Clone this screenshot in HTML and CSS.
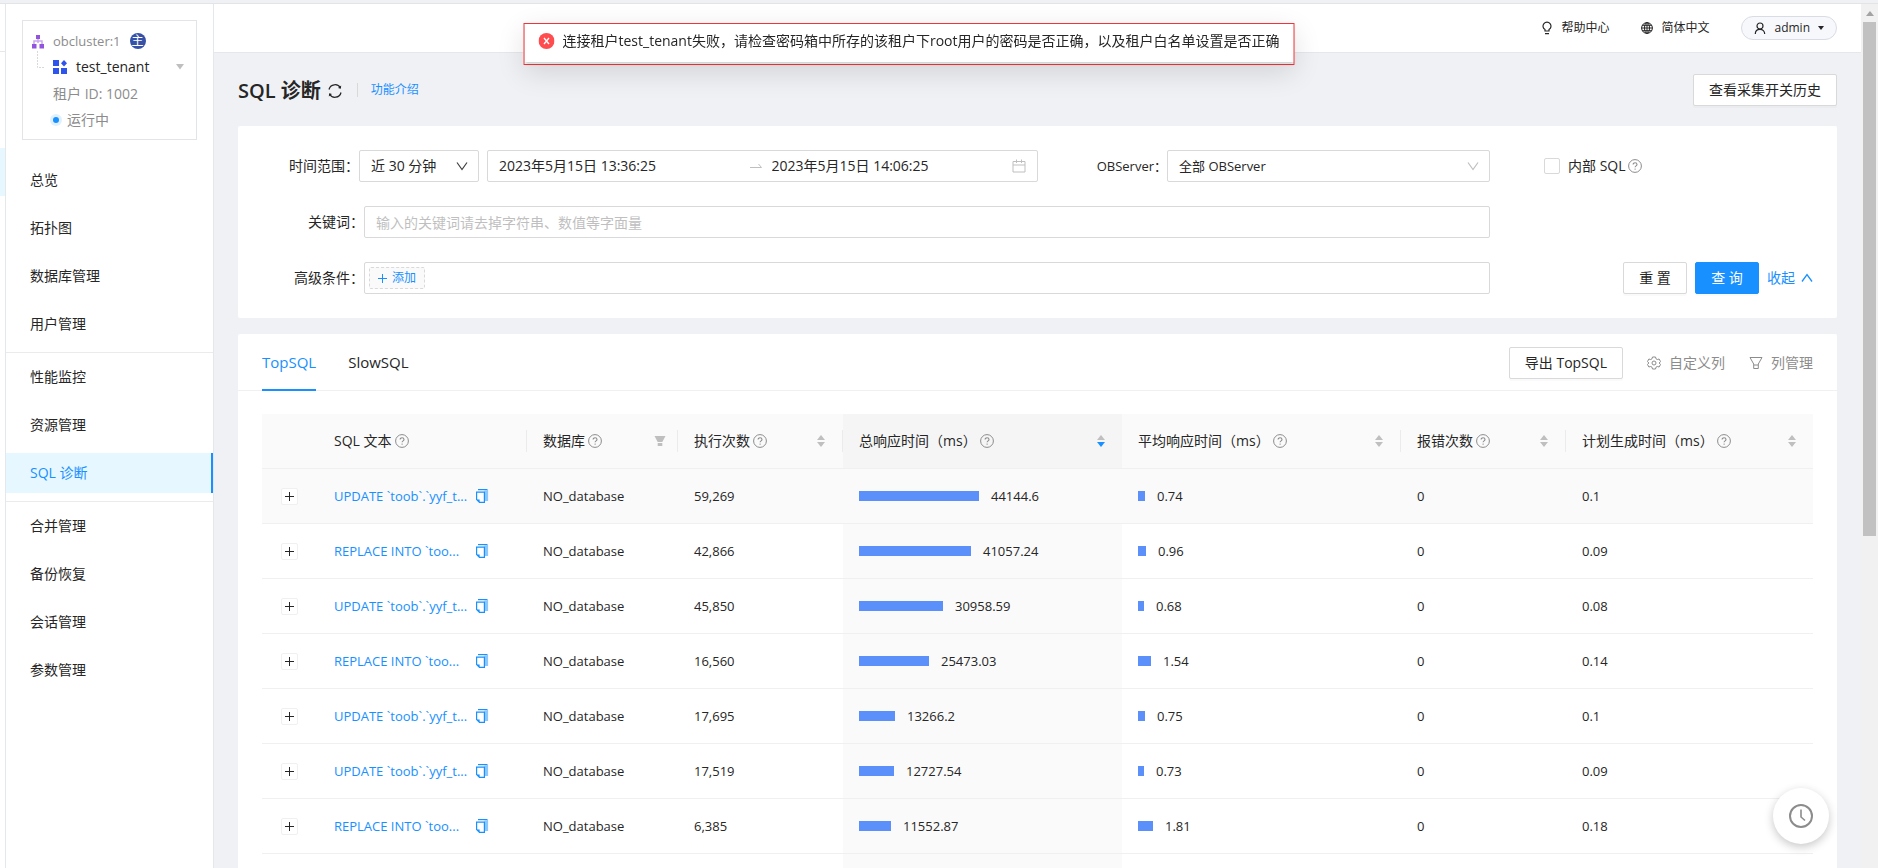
FILE: index.html
```html
<!DOCTYPE html>
<html lang="zh-CN">
<head>
<meta charset="utf-8">
<title>SQL 诊断</title>
<link rel="stylesheet" href="styles.css">
</head>
<body>
<svg class="sprite" aria-hidden="true">
  <symbol id="help" viewBox="0 0 14 14"><circle cx="7" cy="7" r="6.4" fill="none" stroke="currentColor"/><path d="M5.1 5.6c0-2.5 3.9-2.4 3.9 0 0 1.300-1.900 1.300-1.900 2.700" fill="none" stroke="currentColor" stroke-width="1.100"/><circle cx="7.100" cy="10.100" r=".7" fill="currentColor"/></symbol>
  <symbol id="copy" viewBox="0 0 14 14"><path d="M9.500 1.500h3v10.500h-3z" fill="#8cc8ff"/><path d="M3 .6h9.500" fill="none" stroke="#1890ff" stroke-width="1.200"/><path d="M12.500 .6v11.400" fill="none" stroke="#8cc8ff" stroke-width="1.200"/><path d="M1.600 3.200h7.800v10.200H4.500L1.600 10.600z" fill="#fff" stroke="#1890ff" stroke-width="1.200"/><path d="M1.600 10.400h3v3z" fill="#1890ff"/></symbol>
  <symbol id="sort" viewBox="0 0 10 14"><path d="M5 1l4 5H1z" class="sort-up"/><path d="M5 13l4-5H1z" class="sort-down"/></symbol>
  <symbol id="chevron" viewBox="0 0 12 12"><path d="M1 2.500l5 7 5-7" fill="none" stroke="currentColor" stroke-width="1.200"/></symbol>
  <symbol id="plus" viewBox="0 0 9 9"><path d="M4.500 0v9M0 4.500h9" fill="none" stroke="currentColor"/></symbol>
</svg>

<div class="topstrip"></div>
<div class="app">
  <div class="rail"><div class="rail-head"></div><div class="rail-active"></div></div>

  <aside class="sidebar">
    <section class="tenant">
      <div class="tenant-tree">
        <svg width="14" height="42" viewBox="0 0 14 42"><path d="M7 3v6M3 12V7h8v5" fill="none" stroke="#c9a7ef" stroke-width="1.500"/><path d="M5 1h4v4H5zM1 10h4.500v4.500H1zM8.500 10H13v4.500H8.500z" fill="#9254de"/><path d="M6.500 17v16.500H14" fill="none" stroke="#d9d9d9" stroke-dasharray="2 1"/></svg>
      </div>
      <div class="tenant-info">
        <div class="cluster"><span>obcluster:1</span><span class="badge">主</span></div>
        <button class="tenant-name" type="button">
          <svg width="14" height="14" viewBox="0 0 14 14" fill="#2f54eb"><path d="M0 0h6v6H0zM0 8h6v6H0zM8 8h6v6H8zM11 0l3 3.200-3 3.200-3-3.200z"/></svg>
          <span>test_tenant</span>
          <svg class="caret" width="8" height="6" viewBox="0 0 8 6"><path d="M0 0h8L4 5.500z" fill="#bfbfbf"/></svg>
        </button>
        <div class="tenant-line">租户 ID: 1002</div>
        <div class="tenant-line state"><i class="dot"></i>运行中</div>
      </div>
    </section>
    <nav class="menu">
      <a href="#">总览</a>
      <a href="#">拓扑图</a>
      <a href="#">数据库管理</a>
      <a href="#">用户管理</a>
      <hr>
      <a href="#">性能监控</a>
      <a href="#">资源管理</a>
      <a href="#" class="active">SQL 诊断</a>
      <hr>
      <a href="#">合并管理</a>
      <a href="#">备份恢复</a>
      <a href="#">会话管理</a>
      <a href="#">参数管理</a>
    </nav>
  </aside>

  <main class="main">
    <header class="header">
      <a href="#" class="header-link"><svg width="12" height="14" viewBox="0 0 12 14" fill="none" stroke="currentColor" stroke-width="1.200"><path d="M4 10V8.600a4 4 0 1 1 4 0V10zM4 12.600h4"/></svg>帮助中心</a>
      <a href="#" class="header-link"><svg width="12" height="12" viewBox="0 0 12 12" fill="none" stroke="currentColor"><circle cx="6" cy="6" r="5.400"/><ellipse cx="6" cy="6" rx="2.500" ry="5.400"/><path d="M6 .5v11M.5 6h11M1.200 3.300h9.600M1.200 8.700h9.600"/></svg>简体中文</a>
      <button class="user" type="button"><svg width="12" height="12" viewBox="0 0 12 12" fill="none" stroke="currentColor" stroke-width="1.200"><circle cx="6" cy="4" r="3"/><path d="M1.300 12c0-3 2-4.600 4.700-4.600S10.700 9 10.700 12"/></svg><span>admin</span><svg class="user-caret" width="6" height="4" viewBox="0 0 6 4"><path d="M0 0h6L3 4z" fill="currentColor"/></svg></button>
    </header>

    <div class="content">
      <div class="page-head">
        <h1>SQL 诊断</h1>
        <button class="icon-btn" type="button" aria-label="刷新"><svg width="16" height="16" viewBox="0 0 16 16" fill="none" stroke="currentColor" stroke-width="1.300"><path d="M2 6.500A6.200 6.200 0 0 1 13.500 5M14 9.500A6.200 6.200 0 0 1 2.500 11"/><path d="M14.200 2.500l-.4 3.200-2.800-.6zM1.800 13.500l.4-3.200 2.800.6z" fill="currentColor" stroke="none"/></svg></button>
        <a href="#" class="intro">功能介绍</a>
        <button class="btn history" type="button">查看采集开关历史</button>
      </div>

      <form class="panel filters">
        <div class="row">
          <div class="fields">
            <label class="label" for="span">时间范围：</label>
            <div class="select-wrap span"><select id="span"><option>近 30 分钟</option></select><svg class="arrow dark" width="12" height="12"><use href="#chevron"/></svg></div>
            <div class="range">
              <input type="text" aria-label="开始时间" value="2023年5月15日 13:36:25">
              <svg class="to" width="12" height="12" viewBox="0 0 12 12" fill="none" stroke="#bfbfbf"><path d="M0 7.500h11.500L8.500 4"/></svg>
              <input type="text" aria-label="结束时间" value="2023年5月15日 14:06:25">
              <svg width="14" height="14" viewBox="0 0 14 14" fill="none" stroke="#bfbfbf"><path d="M1 2.500h12v10.500H1zM1 6h12M4.500.5v3.500M9.500.5v3.500"/></svg>
            </div>
            <label class="label server-label" for="server">OBServer：</label>
            <div class="select-wrap server"><select id="server"><option>全部 OBServer</option></select><svg class="arrow" width="12" height="12"><use href="#chevron"/></svg></div>
          </div>
          <div class="side"><label class="check"><input type="checkbox"><span>内部 SQL</span></label><svg class="help" width="14" height="14"><use href="#help"/></svg></div>
        </div>
        <div class="row">
          <div class="fields">
            <label class="label wide" for="keyword">关键词：</label>
            <input class="text" id="keyword" type="text" placeholder="输入的关键词请去掉字符串、数值等字面量">
          </div>
        </div>
        <div class="row">
          <div class="fields">
            <span class="label wide">高级条件：</span>
            <div class="text conditions"><button class="add" type="button"><svg width="9" height="9"><use href="#plus"/></svg>添加</button></div>
          </div>
          <div class="actions">
            <button class="btn" type="reset">重 置</button>
            <button class="btn primary" type="button">查 询</button>
            <a href="#" class="fold">收起<svg width="12" height="12" viewBox="0 0 12 12"><path d="M1 9.500l5-7 5 7" fill="none" stroke="currentColor" stroke-width="1.300"/></svg></a>
          </div>
        </div>
      </form>

      <section class="panel results">
        <div class="tabs">
          <a href="#" class="tab active">TopSQL</a>
          <a href="#" class="tab">SlowSQL</a>
          <div class="tools">
            <button class="btn" type="button">导出 TopSQL</button>
            <a href="#" class="tool"><svg width="14" height="14" viewBox="0 0 14 14" fill="none" stroke="currentColor"><path d="M5.500 1h3l.5 1.800 1.300.7 1.800-.5 1.400 2.500L12.200 7l1.300 1.500-1.400 2.500-1.800-.5-1.300.7-.5 1.800h-3L5 11.200l-1.300-.7-1.800.5L.5 8.500 1.800 7 .5 5.500 1.900 3l1.800.5L5 2.800z"/><circle cx="7" cy="7" r="2"/></svg>自定义列</a>
            <a href="#" class="tool"><svg width="14" height="14" viewBox="0 0 14 14" fill="none" stroke="currentColor"><path d="M1 1.500h12L9.300 8v4.500H4.700V8zM4.700 9h4.600"/></svg>列管理</a>
          </div>
        </div>
        <table>
          <colgroup><col class="c-plus"><col class="c-sql"><col class="c-db"><col class="c-count"><col class="c-total"><col class="c-avg"><col class="c-err"><col class="c-plan"></colgroup>
          <thead>
            <tr>
              <th></th>
              <th><div class="th sep"><span>SQL 文本</span><svg class="help" width="14" height="14"><use href="#help"/></svg></div></th>
              <th><div class="th sep filterable"><span>数据库</span><svg class="help" width="14" height="14"><use href="#help"/></svg><svg class="order" width="12" height="12" viewBox="0 0 12 12" fill="#bfbfbf"><path d="M.5 1h11L8.300 7H3.700zM3.700 8h4.600v3H3.700z"/></svg></div></th>
              <th><div class="th sep"><span>执行次数</span><svg class="help" width="14" height="14"><use href="#help"/></svg><svg class="order" width="10" height="14"><use href="#sort"/></svg></div></th>
              <th class="sorted"><div class="th"><span>总响应时间（ms）</span><svg class="help" width="14" height="14"><use href="#help"/></svg><svg class="order desc" width="10" height="14"><use href="#sort"/></svg></div></th>
              <th><div class="th sep"><span>平均响应时间（ms）</span><svg class="help" width="14" height="14"><use href="#help"/></svg><svg class="order" width="10" height="14"><use href="#sort"/></svg></div></th>
              <th><div class="th sep"><span>报错次数</span><svg class="help" width="14" height="14"><use href="#help"/></svg><svg class="order" width="10" height="14"><use href="#sort"/></svg></div></th>
              <th><div class="th"><span>计划生成时间（ms）</span><svg class="help" width="14" height="14"><use href="#help"/></svg><svg class="order" width="10" height="14"><use href="#sort"/></svg></div></th>
            </tr>
          </thead>
          <tbody>
            <tr class="hover"><td><button class="expand" type="button" aria-label="展开"><svg width="9" height="9"><use href="#plus"/></svg></button></td><td><div class="sql"><a href="#">UPDATE `toob`.`yyf_t...</a><svg width="14" height="14"><use href="#copy"/></svg></div></td><td>NO_database</td><td>59,269</td><td class="sorted"><div class="meter"><i style="width:120px"></i>44144.6</div></td><td><div class="meter"><i style="width:7px"></i>0.74</div></td><td>0</td><td>0.1</td></tr>
            <tr><td><button class="expand" type="button" aria-label="展开"><svg width="9" height="9"><use href="#plus"/></svg></button></td><td><div class="sql"><a href="#">REPLACE INTO `too...</a><svg width="14" height="14"><use href="#copy"/></svg></div></td><td>NO_database</td><td>42,866</td><td class="sorted"><div class="meter"><i style="width:112px"></i>41057.24</div></td><td><div class="meter"><i style="width:8px"></i>0.96</div></td><td>0</td><td>0.09</td></tr>
            <tr><td><button class="expand" type="button" aria-label="展开"><svg width="9" height="9"><use href="#plus"/></svg></button></td><td><div class="sql"><a href="#">UPDATE `toob`.`yyf_t...</a><svg width="14" height="14"><use href="#copy"/></svg></div></td><td>NO_database</td><td>45,850</td><td class="sorted"><div class="meter"><i style="width:84px"></i>30958.59</div></td><td><div class="meter"><i style="width:6px"></i>0.68</div></td><td>0</td><td>0.08</td></tr>
            <tr><td><button class="expand" type="button" aria-label="展开"><svg width="9" height="9"><use href="#plus"/></svg></button></td><td><div class="sql"><a href="#">REPLACE INTO `too...</a><svg width="14" height="14"><use href="#copy"/></svg></div></td><td>NO_database</td><td>16,560</td><td class="sorted"><div class="meter"><i style="width:70px"></i>25473.03</div></td><td><div class="meter"><i style="width:13px"></i>1.54</div></td><td>0</td><td>0.14</td></tr>
            <tr><td><button class="expand" type="button" aria-label="展开"><svg width="9" height="9"><use href="#plus"/></svg></button></td><td><div class="sql"><a href="#">UPDATE `toob`.`yyf_t...</a><svg width="14" height="14"><use href="#copy"/></svg></div></td><td>NO_database</td><td>17,695</td><td class="sorted"><div class="meter"><i style="width:36px"></i>13266.2</div></td><td><div class="meter"><i style="width:7px"></i>0.75</div></td><td>0</td><td>0.1</td></tr>
            <tr><td><button class="expand" type="button" aria-label="展开"><svg width="9" height="9"><use href="#plus"/></svg></button></td><td><div class="sql"><a href="#">UPDATE `toob`.`yyf_t...</a><svg width="14" height="14"><use href="#copy"/></svg></div></td><td>NO_database</td><td>17,519</td><td class="sorted"><div class="meter"><i style="width:35px"></i>12727.54</div></td><td><div class="meter"><i style="width:6px"></i>0.73</div></td><td>0</td><td>0.09</td></tr>
            <tr><td><button class="expand" type="button" aria-label="展开"><svg width="9" height="9"><use href="#plus"/></svg></button></td><td><div class="sql"><a href="#">REPLACE INTO `too...</a><svg width="14" height="14"><use href="#copy"/></svg></div></td><td>NO_database</td><td>6,385</td><td class="sorted"><div class="meter"><i style="width:32px"></i>11552.87</div></td><td><div class="meter"><i style="width:15px"></i>1.81</div></td><td>0</td><td>0.18</td></tr>
            <tr><td></td><td></td><td></td><td></td><td class="sorted"></td><td></td><td></td><td></td></tr>
          </tbody>
        </table>
      </section>
    </div>
  </main>

  <div class="scrollbar"><svg width="8" height="5" viewBox="0 0 8 5"><path d="M0 5l4-5 4 5z" fill="#a3a3a3"/></svg><div class="thumb"></div></div>
</div>

<div class="message" role="alert"><div class="message-body"><svg width="16" height="16" viewBox="0 0 16 16"><circle cx="8" cy="8" r="8" fill="#ff4d4f"/><path d="M5.500 5l5 6M10.500 5l-5 6" stroke="#fff" stroke-width="1.300"/></svg><span>连接租户test_tenant失败，请检查密码箱中所存的该租户下root用户的密码是否正确，以及租户白名单设置是否正确</span></div></div>
<button class="float" type="button" aria-label="历史"><svg width="24" height="24" viewBox="0 0 24 24" fill="none" stroke="#8c8c8c" stroke-width="2"><circle cx="12" cy="12" r="11"/><path d="M12 5.500V13l4 3.500" stroke-width="1.600"/></svg></button>
</body>
</html>
```
FILE: styles.css
```css
* { box-sizing: border-box; }
body {
  margin: 0;
  height: 100vh;
  overflow: hidden;
  display: flex;
  flex-direction: column;
  font: 14px/22px "Open Sans", "Noto Sans CJK SC", sans-serif;
  color: #262626;
  background: #f0f1f5;
}
a { color: #1890ff; text-decoration: none; }
button, input, select { font: inherit; color: inherit; margin: 0; }
svg { flex: none; display: block; }
.sprite { position: absolute; width: 0; height: 0; }
.sort-up { fill: var(--up, #bfbfbf); }
.sort-down { fill: var(--down, #bfbfbf); }
.desc { --down: #1890ff; }

.topstrip { flex: none; height: 4px; border-bottom: 1px solid #e3e4e8; }
.app { flex: 1; min-height: 0; display: flex; }

.rail { flex: none; width: 6px; background: #fff; border-right: 1px solid #e6e7eb; }
.rail-head { height: 48px; border-bottom: 1px solid #e6e7eb; }
.rail-active { height: 48px; margin-top: 96px; background: #e6f7ff; }

.sidebar { flex: none; width: 208px; background: #fff; border-right: 1px solid #e6e7eb; }
.tenant { display: flex; margin: 16px 16px 20px; padding: 8px 12px 8px 8px; border: 1px solid #e3e4e8; height: 120px; }
.tenant-tree { width: 22px; padding-top: 5px; }
.tenant-info { flex: 1; color: #8c8c8c; }
.cluster { display: flex; align-items: center; gap: 9px; height: 24px; font-size: 13px; }
.badge { width: 16px; height: 16px; border-radius: 50%; background: #3652a8; color: #fff; font-size: 12px; line-height: 15px; text-align: center; }
.tenant-name { display: flex; align-items: center; gap: 9px; width: 100%; height: 28px; padding: 0; border: 0; background: none; color: #262626; }
.caret { margin-left: auto; }
.tenant-line { line-height: 26px; }
.state { display: flex; align-items: center; gap: 8px; }
.dot { width: 6px; height: 6px; border-radius: 50%; background: #1890ff; box-shadow: 0 0 0 3px #e0f0ff; }

.menu a { display: block; height: 40px; line-height: 40px; margin-bottom: 8px; padding-left: 24px; color: #262626; }
.menu a.active { color: #1890ff; background: #e6f7ff; border-right: 2px solid #1890ff; }
.menu hr { height: 1px; margin: 0 0 4px; border: 0; background: #ebebeb; }

.main { flex: 1; min-width: 0; }
.header { display: flex; justify-content: flex-end; align-items: center; height: 49px; padding: 0 24px; background: #fff; border-bottom: 1px solid #e6e7eb; font-size: 12px; }
.header-link { display: flex; align-items: center; gap: 8px; margin-right: 32px; color: #262626; }
.user { display: flex; align-items: center; gap: 8px; height: 24px; padding: 0 12px; border: 1px solid #d9dce4; border-radius: 12px; background: #f7f8fc; }

.content { padding: 21px 24px 0; }
.page-head { display: flex; align-items: center; height: 32px; margin-bottom: 20px; }
h1 { margin: 0 6px 0 0; padding-top: 2px; font-size: 20px; line-height: 28px; font-weight: 600; }
.icon-btn { padding: 2px 0 0; border: 0; background: none; }
.intro { margin-left: 14px; padding-left: 13px; border-left: 1px solid #d9d9d9; font-size: 12px; line-height: 14px; }
.btn { height: 32px; padding: 0 15px; border: 1px solid #d9d9d9; border-radius: 2px; background: #fff; box-shadow: 0 2px 0 rgba(0, 0, 0, .02); white-space: nowrap; }
.primary { border-color: #1890ff; background: #1890ff; color: #fff; }
.history { margin-left: auto; }
.panel { background: #fff; border-radius: 2px; }

.filters { display: flex; flex-direction: column; gap: 24px; padding: 24px; margin-bottom: 16px; }
.row { display: grid; grid-template-columns: 1228fr 323fr; height: 32px; }
.fields { display: flex; align-items: center; min-width: 0; }
.label { flex: none; width: 97px; text-align: right; white-space: nowrap; }
.label.wide { width: 102px; }
.server-label { width: 129px; font-size: 13px; }
.select-wrap { position: relative; height: 32px; }
.select-wrap select { width: 100%; height: 32px; padding: 0 11px; border: 1px solid #d9d9d9; border-radius: 2px; background: #fff; appearance: none; }
.span { flex: none; width: 120px; }
.server { flex: 323 1 323px; }
.server select { font-size: 13px; }
.arrow { position: absolute; right: 11px; top: 10px; color: #bfbfbf; pointer-events: none; }
.arrow.dark { color: #404040; }
.range { flex: 551 1 551px; min-width: 0; display: flex; align-items: center; height: 32px; margin-left: 8px; padding: 0 11px; border: 1px solid #d9d9d9; border-radius: 2px; }
.range input { flex: 1; min-width: 0; padding: 0; border: 0; outline: 0; background: none; }
.to { margin: 0 10px; }
.text { flex: 1; min-width: 0; height: 32px; padding: 0 11px; border: 1px solid #d9d9d9; border-radius: 2px; }
.text::placeholder { color: #bfbfbf; }
.conditions { display: flex; align-items: center; padding: 0 4px; }
.add { display: flex; align-items: center; gap: 5px; height: 22px; padding: 0 8px; border: 1px dashed #d9d9d9; border-radius: 2px; background: #fafafa; color: #1890ff; font-size: 12px; line-height: 20px; }
.side { display: flex; align-items: center; padding-left: 54px; gap: 2px; }
.check { display: flex; align-items: center; gap: 8px; }
.check input { appearance: none; width: 16px; height: 16px; border: 1px solid #d9d9d9; border-radius: 2px; background: #fff; }
.help { color: #8c8c8c; }
.actions { display: flex; justify-content: flex-end; align-items: center; gap: 8px; }
.actions .btn { min-width: 64px; }
.fold { display: flex; align-items: center; gap: 6px; }

.tabs { display: flex; height: 57px; padding: 0 24px; border-bottom: 1px solid #f0f0f0; }
.tab { height: 57px; margin-right: 32px; color: #262626; font-size: 15px; line-height: 57px; }
.tab.active { color: #1890ff; border-bottom: 2px solid #1890ff; }
.tools { display: flex; align-items: center; gap: 24px; margin-left: auto; padding-top: 2px; }
.tool { display: flex; align-items: center; gap: 8px; color: #8c8c8c; }

table { width: calc(100% - 48px); margin: 23px 24px 0; table-layout: fixed; border-collapse: separate; border-spacing: 0; }
.c-plus { width: 56px; }
.c-sql { width: 209px; }
.c-db { width: 151px; }
.c-count { width: 165px; }
.c-total { width: 279px; }
.c-avg { width: 279px; }
.c-err { width: 165px; }
.c-plan { width: 247px; }
th { height: 55px; padding: 0; background: #fafafa; border-bottom: 1px solid #f0f0f0; font-weight: 400; text-align: left; }
th.sorted { background: #f5f5f5; }
.th { display: flex; align-items: center; gap: 3px; height: 22px; padding: 0 16px; white-space: nowrap; }
.th.sep { border-right: 1px solid #ebebeb; }
.th.filterable { padding-right: 11px; }
.order { margin-left: auto; }
td { height: 55px; padding: 0 16px; border-bottom: 1px solid #f0f0f0; font-size: 13px; white-space: nowrap; }
.hover td, td.sorted { background: #fafafa; }
.expand { display: flex; align-items: center; justify-content: center; width: 17px; height: 17px; margin-left: 3px; padding: 0; border: 1px solid #f0f0f0; border-radius: 2px; background: #fff; }
.sql { display: flex; align-items: center; justify-content: space-between; width: 155px; }
.meter { display: flex; align-items: center; gap: 12px; }
.meter i { height: 10px; background: #5b8ff9; }

.scrollbar { flex: none; display: flex; flex-direction: column; align-items: center; gap: 6px; width: 17px; padding-top: 7px; background: #f1f1f1; }
.thumb { width: 13px; height: 60%; background: #c1c1c1; }

.message { position: fixed; top: 23px; left: 50%; transform: translateX(-50%); margin-left: -30px; border: 1px solid #f5343a; background: #fff; box-shadow: 0 8px 28px rgba(0, 0, 0, .12); }
.message-body { display: flex; align-items: center; gap: 8px; height: 38px; margin-bottom: 2px; padding: 0 14px 4px; white-space: nowrap; box-shadow: 0 2px 3px rgba(0, 0, 0, .2); }
.float { position: fixed; right: 49px; bottom: 24px; display: flex; align-items: center; justify-content: center; width: 56px; height: 56px; padding: 0; border: 0; border-radius: 50%; background: #fff; box-shadow: 0 3px 10px rgba(0, 0, 0, .22); }
```
